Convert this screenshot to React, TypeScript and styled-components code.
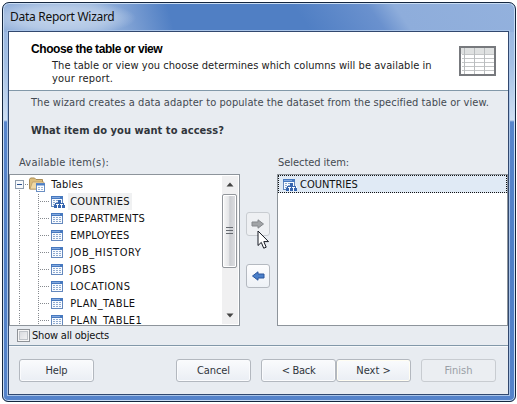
import React from "react";
import styled, { createGlobalStyle } from "styled-components";

const Global = createGlobalStyle`
  * { box-sizing: border-box; }
  html, body { margin: 0; padding: 0; background: #fff; overflow: hidden; }
  body { font-family: "DejaVu Sans Condensed", "DejaVu Sans", sans-serif; font-stretch: condensed; font-size: 11px; color: #111; }
`;

const Page = styled.div`
  width: 517px;
  height: 404px;
  padding: 2px 1px 2px 2px;
`;

const Window = styled.div`
  width: 514px;
  height: 400px;
  display: flex;
  flex-direction: column;
  border: 1px solid #14263f;
  border-radius: 7px 7px 6px 6px;
  box-shadow: inset 0 0 0 1px #c8dcf3;
  padding: 0 6px 6px 5px;
  background:
    radial-gradient(ellipse 75px 18px at 58px 15px, #c4d5ec 0, #b4c9e6 60%, transparent 100%) 0 0 / 100% 28px no-repeat,
    linear-gradient(75deg, #93b0da 0%, #9db9df 18%, #7c9fd3 25%, #507fc4 33%, transparent 33.1%) 0 0 / 100% 29px no-repeat,
    linear-gradient(55deg, #507fc4 0%, #507fc4 58%, #6a91ce 72%, #8eaddb 77%, #93b1dd 100%) 0 0 / 100% 29px no-repeat,
    linear-gradient(#93b1dd 0, #a3bfe4 60px, #cfdff2 117px, #5885cb 119px, #4f7fc6 260px, #5583ca 100%);
`;

const TitleBar = styled.div`
  height: 28px;
  flex: none;
  display: flex;
  align-items: center;
  padding: 0 0 1px 2px;
`;

const Fit = styled.span<{ $s?: number }>`
  white-space: pre;
  letter-spacing: ${(p) => p.$s ?? 0}px;
`;

const Title = styled(Fit)`
  font: 12px "Noto Sans", sans-serif;
  color: #101010;
`;

const Client = styled.div`
  flex: 1;
  display: flex;
  flex-direction: column;
  border: 1px solid #31486f;
  outline: 1px solid #a9c4e8;
  background: #e8ecf1;
`;

const Header = styled.div`
  height: 59px;
  flex: none;
  display: flex;
  justify-content: space-between;
  background: #fff;
  border-bottom: 1px solid #8298a9;
  padding: 9px 11px 0 22px;
`;

const HeaderText = styled.div`
  line-height: 13px;
`;

const Heading = styled.div`
  font: bold 12px/15px "Liberation Sans", sans-serif;
  height: 18px;
  padding-top: 1px;
  color: #000;
`;

const Description = styled.div`
  padding-left: 21px;
  color: #222;
`;

const TableGlyph = styled.svg`
  display: block;
  margin-top: 5px;
`;

const Intro = styled.div`
  height: 83px;
  flex: none;
  padding: 5px 0 0 22px;
  color: #444a52;
  line-height: 14px;
`;

const Question = styled.div`
  margin-top: 14px;
  font-weight: bold;
  color: #30353b;
`;

const Panels = styled.div`
  display: flex;
  height: 171px;
  flex: none;
`;

const Column = styled.div<{ $w: number }>`
  width: ${(p) => p.$w}px;
  display: flex;
  flex-direction: column;
`;

const Label = styled.div<{ $pad: number }>`
  height: 17px;
  margin-top: -17px;
  padding-left: ${(p) => p.$pad}px;
  color: #444a52;
  line-height: 12px;
`;

const List = styled.div`
  height: 152px;
  flex: none;
  display: flex;
  border: 1px solid #8d949b;
  background: #fff;
  overflow: hidden;
`;

const Tree = styled.div`
  flex: 1;
  height: 150px;
  overflow: hidden;
  padding-top: 1px;
`;

const TreeRow = styled.div`
  height: 17px;
  display: flex;
  align-items: center;
`;

const Item = styled(Fit)<{ $current?: boolean }>`
  height: 17px;
  line-height: 18px;
  padding: 0 2px;
  color: #111;
  background: ${(p) => (p.$current ? "#f0f1f2" : "transparent")};
`;

const ScrollBar = styled.div`
  width: 16px;
  height: 148px;
  margin: 1px 1px 1px 0;
  background: #f0f0f1;
  display: flex;
  flex-direction: column;
  justify-content: space-between;
`;

const ScrollArrow = styled.svg`
  display: block;
`;

const Thumb = styled.div`
  width: 15px;
  height: 74px;
  margin-bottom: 39px;
  border: 1px solid #92969b;
  border-radius: 2px;
  box-shadow: inset 0 0 0 1px #fff;
  background: linear-gradient(90deg, #f8f8f8 0%, #e4e5e7 45%, #cbcdd1 52%, #dedfe2 100%);
  display: flex;
  align-items: center;
  justify-content: center;
`;

const Transfer = styled.div`
  width: 37px;
  display: flex;
  flex-direction: column;
  padding: 38px 0 0 6px;
  gap: 28px;
`;

const ArrowButton = styled.div<{ $off?: boolean }>`
  position: relative;
  width: 24px;
  height: 24px;
  border: 1px solid ${(p) => (p.$off ? "#c8ccd1" : "#b4b9c0")};
  border-radius: 3px;
  background: ${(p) => (p.$off ? "#eef0f3" : "linear-gradient(#fdfdfe, #edf1f6)")};
  display: flex;
  align-items: center;
  justify-content: center;
`;

const Cursor = styled.svg`
  position: absolute;
  left: 10px;
  top: 17px;
  z-index: 2;
`;

const SelectedRow = styled.div`
  flex: 1;
  height: 18px;
  border: 1px dotted #111;
  background: #e0eaf5;
  display: flex;
  align-items: center;
  padding-left: 4px;
  gap: 1px;
`;

const Options = styled.label`
  height: 19px;
  display: flex;
  align-items: center;
  padding: 0 0 0 8px;
  gap: 2px;
`;

const Check = styled.span`
  width: 13px;
  height: 13px;
  border: 1px solid #8e9297;
  box-shadow: inset 0 0 0 1px #f6f6f6, inset 0 0 0 2px #bfc3c8;
  background: linear-gradient(135deg, #d3d6da, #f7f7f7);
`;

const Footer = styled.div`
  flex: 1;
  border-top: 1px solid #8298a9;
  box-shadow: inset 0 1px 0 #f7f9fb;
  display: flex;
  padding: 13px 0 0 10px;
`;

const Button = styled.div<{ $ml?: number; $off?: boolean; $focus?: boolean }>`
  width: 75px;
  height: 23px;
  margin-left: ${(p) => p.$ml ?? 0}px;
  border: 1px solid ${(p) => (p.$off ? "#c8ccd1" : "#b3b8bf")};
  border-radius: 3px;
  box-shadow: inset 0 0 0 1px ${(p) => (p.$off ? "transparent" : p.$focus ? "#fffdf2" : "#fafbfd")};
  background: ${(p) => (p.$off ? "#ebeef2" : "linear-gradient(#fafbfd, #eaeef4)")};
  color: ${(p) => (p.$off ? "#9a9fa6" : "#30353c")};
  display: flex;
  align-items: center;
  justify-content: center;
`;

function Dots({ root }: { root?: boolean }) {
  return (
    <svg width={root ? 19 : 41} height="17" shapeRendering="crispEdges" fill="none" stroke="#85898e">
      {root ? (
        <>
          <rect x="5.5" y="4.5" width="8" height="8" fill="#f7f9fc" stroke="#8d9bad" />
          <path d="M7 8.5h5" stroke="#294f8b" />
          <path d="M15 8.5h4" strokeDasharray="1 1" />
          <path d="M9.5 14v3" strokeDasharray="1 1" />
        </>
      ) : (
        <>
          <path d="M9.5 1v16" strokeDasharray="1 1" />
          <path d="M28.5 1v16" strokeDasharray="1 1" />
          <path d="M30 8.5h9" strokeDasharray="1 1" />
        </>
      )}
    </svg>
  );
}

function TableIcon({ linked }: { linked?: boolean }) {
  return (
    <svg width="14" height="13" viewBox="0 0 14 13" shapeRendering="crispEdges">
      <rect x="0.5" y="1.5" width="11" height="10" fill="#f8fbff" stroke="#6488bd" />
      <rect x="0" y="1" width="12" height="3" fill="#4779bf" />
      <rect x="1" y="2" width="8" height="1" fill="#83a9df" />
      <path d="M2 5.5h2M5 5.5h2M8 5.5h2M2 7.5h2M5 7.5h2M8 7.5h2M2 9.5h2M5 9.5h2M8 9.5h2" stroke="#8ea9ce" />
      {linked && (
        <>
          <path d="M4 8h10v5H4z" fill="#fff" />
          <path d="M7 5h3v3H7zM3 10h3v3H3zM7 10h3v3H7zM11 10h3v3h-3z" fill="#3565b0" />
          <path d="M8.5 8v2M4.5 10V8.5h8V10" fill="none" stroke="#3565b0" />
        </>
      )}
    </svg>
  );
}

function FolderIcon() {
  return (
    <svg width="17" height="15" viewBox="0 0 17 15">
      <path d="M.5 12V2.5L1.5 1h4L7 2.5h6.5V12z" fill="#dcbd7b" stroke="#a98b55" />
      <path d="M1 12 3.5 5H15l-1.5 7z" fill="#f0d9a5" stroke="#b79a65" strokeWidth=".7" />
      <rect x="7.5" y="6.5" width="8" height="8" fill="#fff" stroke="#6b8fc3" />
      <path d="M7 7.5h9" stroke="#4e7fc4" strokeWidth="2" />
      <path d="M9 10.5h6M9 12.5h6" stroke="#9db8dc" strokeDasharray="2 1" />
    </svg>
  );
}

const rows: [string, number][] = [
  ["COUNTRIES", 0.2],
  ["DEPARTMENTS", 0.2],
  ["EMPLOYEES", 0.15],
  ["JOB_HISTORY", 0.55],
  ["JOBS", 0.6],
  ["LOCATIONS", 0.45],
  ["PLAN_TABLE", 0.4],
  ["PLAN_TABLE1", 0.4],
];

export default function App() {
  return (
    <Page>
      <Global />
      <Window>
        <TitleBar><Title $s={-0.29}>Data Report Wizard</Title></TitleBar>
        <Client>
          <Header>
            <HeaderText>
              <Heading><Fit $s={-0.42}>Choose the table or view</Fit></Heading>
              <Description>
                <div><Fit $s={0.045}>The table or view you choose determines which columns will be available in</Fit></div>
                <div><Fit $s={0.2}>your report.</Fit></div>
              </Description>
            </HeaderText>
            <TableGlyph width="38" height="31" shapeRendering="crispEdges">
              <rect x="1" y="1" width="35" height="28" fill="#fff" />
              <rect x="1" y="1" width="35" height="7" fill="#dfe1e1" />
              <path d="M3 8.5h33M3 12.5h33M3 16.5h33M3 20.5h33M3 24.5h33" stroke="#c4c6c7" />
              <path d="M5.5 1v28M15.5 1v28M25.5 1v28" stroke="#b9bcbe" />
              <rect x="1" y="1" width="35" height="28" fill="none" stroke="#77797d" strokeWidth="2" />
            </TableGlyph>
          </Header>
          <Intro>
            <Fit $s={0.06}>The wizard creates a data adapter to populate the dataset from the specified table or view.</Fit>
            <Question><Fit $s={0.06}>What item do you want to access?</Fit></Question>
          </Intro>
          <Panels>
            <Column $w={231}>
              <Label $pad={10}><Fit $s={0.2}>Available item(s):</Fit></Label>
              <List>
                <Tree>
                  <TreeRow><Dots root /><FolderIcon /><Item $s={0.2}>{" Tables"}</Item></TreeRow>
                  {rows.map(([name, s], i) => (
                    <TreeRow key={name}>
                      <Dots />
                      <TableIcon linked={i === 0} />
                      <span>&nbsp;</span>
                      <Item $s={s} $current={i === 0}>{name}</Item>
                    </TreeRow>
                  ))}
                </Tree>
                <ScrollBar>
                  <ScrollArrow width="16" height="17"><path d="M4.5 10.5 8 6.5l3.5 4z" fill="#444" /></ScrollArrow>
                  <Thumb>
                    <svg width="7" height="8" shapeRendering="crispEdges"><path d="M0 .5h7M0 3.5h7M0 6.5h7" stroke="#666a70" /></svg>
                  </Thumb>
                  <ScrollArrow width="16" height="17"><path d="M4.5 6.5h7L8 10.5z" fill="#444" /></ScrollArrow>
                </ScrollBar>
              </List>
              <Options><Check /><Fit $s={-0.2}>Show all objects</Fit></Options>
            </Column>
            <Transfer>
              <ArrowButton $off>
                <svg width="14" height="12"><path d="M1 4h6V1.8L12.5 6 7 10.2V8H1z" fill="#a1a4a7" stroke="#85888c" /></svg>
                <Cursor width="14" height="20"><path d="M1 1v14.5l3.3-3.1 2.4 5.8 2.5-1-2.4-5.6h4.7z" fill="#fff" stroke="#151922" /></Cursor>
              </ArrowButton>
              <ArrowButton>
                <svg width="14" height="12"><path d="M13 4H7V1.8L1.5 6 7 10.2V8h6z" fill="#4a7fc9" stroke="#2c579d" /></svg>
              </ArrowButton>
            </Transfer>
            <Column $w={231}>
              <Label $pad={1}><Fit $s={-0.05}>Selected item:</Fit></Label>
              <List><SelectedRow><TableIcon linked /><Item>COUNTRIES</Item></SelectedRow></List>
            </Column>
          </Panels>
          <Footer>
            <Button><Fit $s={-0.2}>Help</Fit></Button>
            <Button $ml={82}><Fit $s={-0.1}>Cancel</Fit></Button>
            <Button $ml={10}><Fit $s={-0.3}>{"< Back"}</Fit></Button>
            <Button $focus><Fit>{"Next >"}</Fit></Button>
            <Button $ml={10} $off><Fit>Finish</Fit></Button>
          </Footer>
        </Client>
      </Window>
    </Page>
  );
}
